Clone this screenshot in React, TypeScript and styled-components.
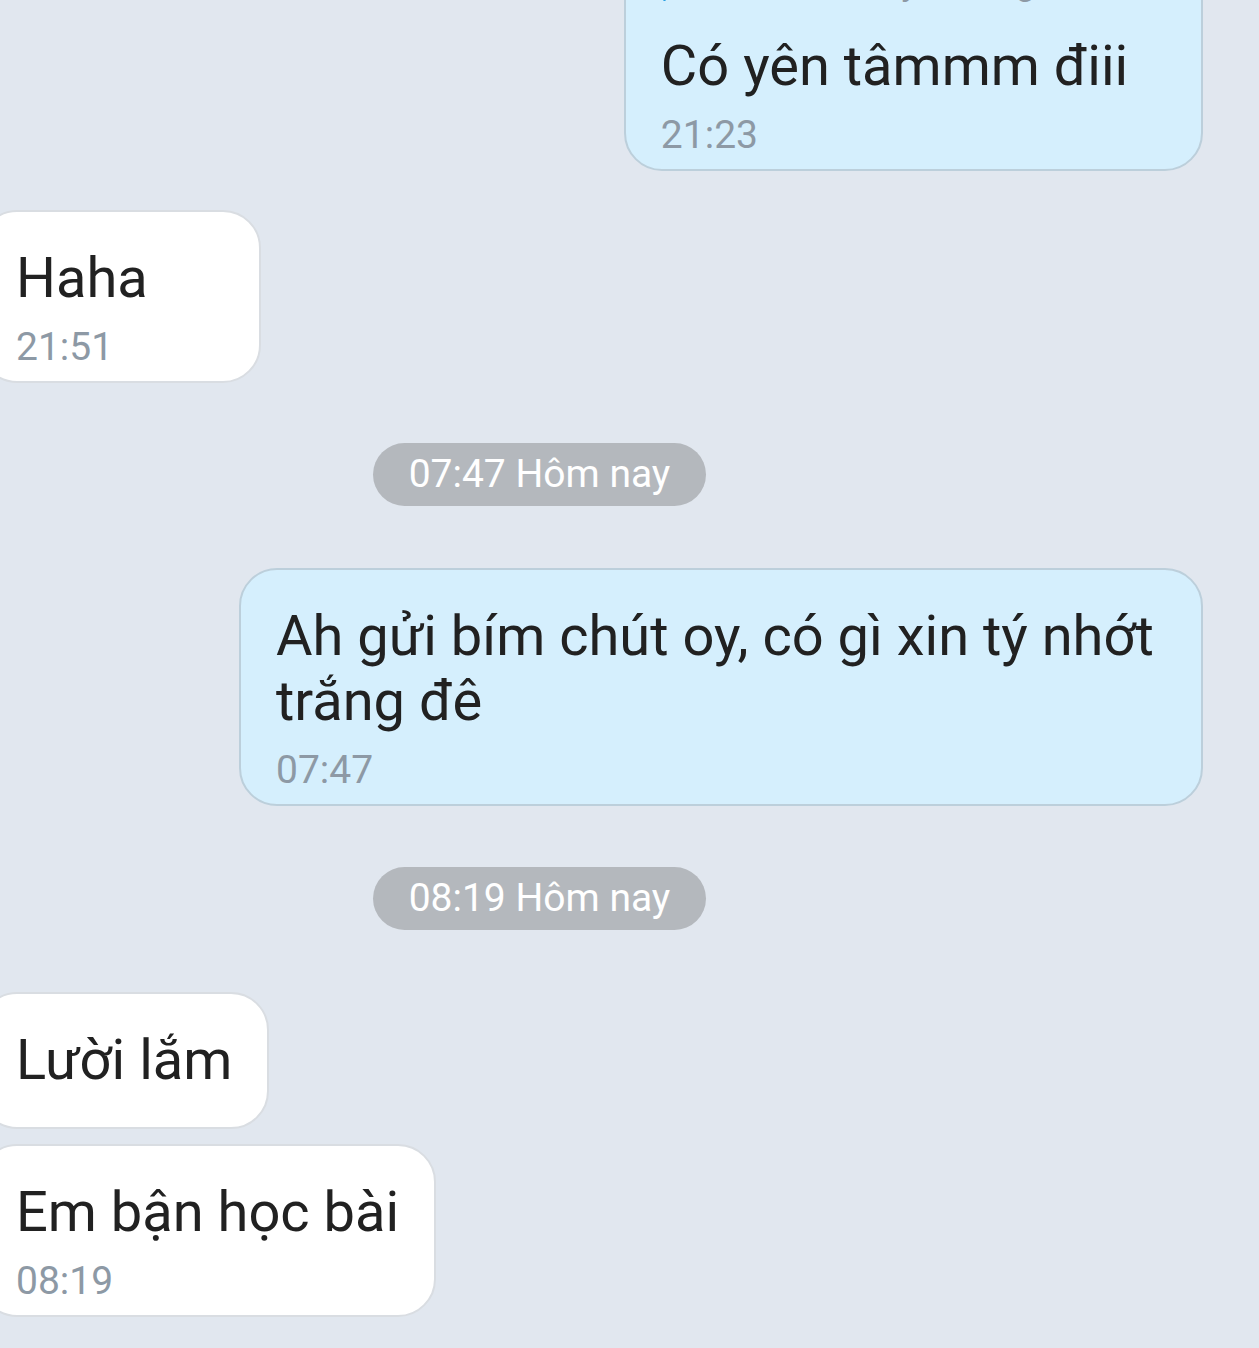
import React from "react";
import styled, { createGlobalStyle } from "styled-components";

const GlobalStyle = createGlobalStyle`
  html, body {
    margin: 0;
    padding: 0;
    background: #e1e7ef;
    overflow: hidden;
  }
  body {
    font-family: Roboto, "Noto Sans", "Liberation Sans", sans-serif;
    -webkit-font-smoothing: antialiased;
  }
`;

const Chat = styled.main`
  display: flex;
  flex-direction: column;
  width: 1259px;
  min-height: 1348px;
  background: #e1e7ef;
`;

type Side = "left" | "right" | "center";

const Row = styled.div<{ $side: Side; $top: number }>`
  display: flex;
  justify-content: ${(p) =>
    p.$side === "right" ? "flex-end" : p.$side === "left" ? "flex-start" : "center"};
  margin-top: ${(p) => p.$top}px;
  padding-right: ${(p) => (p.$side === "right" ? 56 : p.$side === "center" ? 180 : 0)}px;
`;

const Bubble = styled.div<{ $mine?: boolean; $hasTime?: boolean }>`
  box-sizing: border-box;
  min-width: 282px;
  max-width: 964px;
  padding: 34px 35px ${(p) => (p.$hasTime ? 12 : 34)}px;
  border-radius: 38px;
  background: ${(p) => (p.$mine ? "#d5effd" : "#ffffff")};
  border: 2px solid ${(p) => (p.$mine ? "#bccfdb" : "#d9dde2")};
  margin-left: ${(p) => (p.$mine ? 0 : -21)}px;
  display: flex;
  flex-direction: column;
`;

const Quote = styled.div`
  display: flex;
  align-items: stretch;
  gap: 23px;
  margin-bottom: 30px;
`;

const QuoteBar = styled.span`
  width: 3px;
  margin-left: 2px;
  margin-bottom: 3px;
  border-radius: 2px;
  background: #1e9be0;
`;

const QuoteText = styled.span`
  font-size: 37px;
  line-height: 44px;
  color: #8d99a5;
  white-space: nowrap;
`;

const Text = styled.div`
  font-size: 56px;
  line-height: 65px;
  color: #212121;
`;

const Time = styled.div`
  margin-top: 14px;
  font-size: 39px;
  line-height: 44px;
  color: #8d99a5;
`;

const DatePill = styled.div`
  height: 63px;
  padding: 0 36px;
  border-radius: 32px;
  background: #b4b8bd;
  color: #ffffff;
  font-size: 39px;
  line-height: 63px;
  white-space: nowrap;
`;

export default function App() {
  return (
    <>
      <GlobalStyle />
      <Chat>
        <Row $side="right" $top={-76}>
          <Bubble $mine $hasTime>
            <Quote>
              <QuoteBar />
              <QuoteText>Anh về rồi này, em ngủ đi nhé</QuoteText>
            </Quote>
            <Text>Có yên tâmmm điii</Text>
            <Time>21:23</Time>
          </Bubble>
        </Row>

        <Row $side="left" $top={39}>
          <Bubble $hasTime>
            <Text>Haha</Text>
            <Time>21:51</Time>
          </Bubble>
        </Row>

        <Row $side="center" $top={60}>
          <DatePill>07:47 Hôm nay</DatePill>
        </Row>

        <Row $side="right" $top={62}>
          <Bubble $mine $hasTime>
            <Text>Ah gửi bím chút oy, có gì xin tý nhớt trắng đê</Text>
            <Time>07:47</Time>
          </Bubble>
        </Row>

        <Row $side="center" $top={61}>
          <DatePill>08:19 Hôm nay</DatePill>
        </Row>

        <Row $side="left" $top={62}>
          <Bubble>
            <Text>Lười lắm</Text>
          </Bubble>
        </Row>

        <Row $side="left" $top={15}>
          <Bubble $hasTime>
            <Text>Em bận học bài</Text>
            <Time>08:19</Time>
          </Bubble>
        </Row>
      </Chat>
    </>
  );
}
